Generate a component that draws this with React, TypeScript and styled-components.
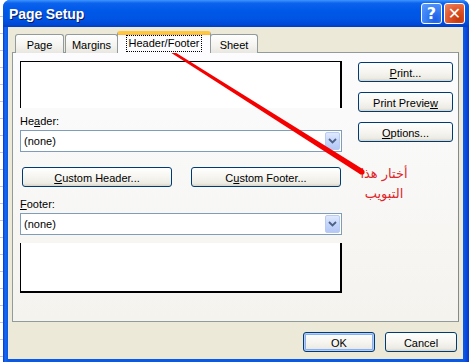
import React from "react";
import styled, { createGlobalStyle, css } from "styled-components";

const Global = createGlobalStyle`
  html, body { margin: 0; padding: 0; }
  body {
    width: 469px; height: 362px; overflow: hidden;
    background: #fff repeating-linear-gradient(to bottom, transparent 0 16px, #c8c8c8 16px 17px);
    font-family: "Liberation Sans", Arial, sans-serif;
    font-size: 11px;
    color: #000;
  }
`;

const Root = styled.div`
  position: relative;
  width: 469px;
  height: 362px;
  display: flex;
`;

const Window = styled.div`
  margin-left: 3px;
  width: 466px;
  height: 362px;
  display: flex;
  flex-direction: column;
  background: linear-gradient(to right, #0831d9 0, #166aee 2px, #0a58e6 5px, #0a58e6 calc(100% - 5px), #0636c8 100%);
  border-radius: 7px 7px 0 0;
  overflow: hidden;
`;

const TitleBar = styled.div`
  height: 27px;
  flex: none;
  display: flex;
  align-items: center;
  padding: 0 4px 0 6px;
  background: linear-gradient(to bottom, #3d95ff 0%, #0b62ec 12%, #0058e8 40%, #0054e3 70%, #0049d6 90%, #003dc4 100%);
`;

const Title = styled.div`
  flex: 1;
  color: #fff;
  font-family: "Liberation Sans", Arial, sans-serif;
  font-weight: bold;
  font-size: 14px;
  text-shadow: 1px 1px 0 #0a1a6a;
  letter-spacing: -0.1px;
  padding-top: 1px;
`;

const CaptionButton = styled.div<{ $kind: "help" | "close" }>`
  width: 19px;
  height: 19px;
  margin-left: 2px;
  border: 1px solid #fff;
  border-radius: 3px;
  display: flex;
  align-items: center;
  justify-content: center;
  color: #fff;
  font-family: "DejaVu Sans", sans-serif;
  font-weight: bold;
  font-size: 16px;
  ${(p) =>
    p.$kind === "help"
      ? css`background: radial-gradient(circle at 70% 80%, #1a5fe8 0%, #3a80f5 50%, #5f9cfa 100%);`
      : css`background: radial-gradient(circle at 70% 80%, #c4380d 0%, #e0562a 50%, #ee8a66 100%);`}
`;

const Frame = styled.div`
  flex: 1;
  display: flex;
  padding: 0 6px 3px 5px;
`;

const Body = styled.div`
  flex: 1;
  background: #ece9d8;
  display: flex;
  flex-direction: column;
  padding: 4px 4px 0 4px;
`;

const TabStrip = styled.div`
  display: flex;
  align-items: flex-end;
  height: 22px;
  padding-left: 3px;
  position: relative;
  z-index: 1;
  margin-bottom: -1px;
`;

const Tab = styled.div<{ $active?: boolean; $w: number }>`
  box-sizing: border-box;
  width: ${(p) => p.$w}px;
  height: 19px;
  margin-right: 1px;
  border: 1px solid #919b9c;
  border-bottom: none;
  border-radius: 3px 3px 0 0;
  background: linear-gradient(to bottom, #fefefe 0%, #f4f3ef 60%, #e7e6df 100%);
  display: flex;
  align-items: center;
  justify-content: center;
  padding-top: 1px;
  ${(p) =>
    p.$active &&
    css`
      height: 22px;
      margin: 0 -1px 0 -2px;
      border-top: 3px solid #ffc83c;
      background: #fcfcfe;
      padding-top: 0;
      box-shadow: inset 0 1px 0 #f8b44a;
    `}
`;

const FocusText = styled.span`
  outline: 1px dotted #000;
  outline-offset: 0;
  padding: 1px 2px 2px;
`;

const Panel = styled.div`
  height: 270px;
  box-sizing: border-box;
  border: 1px solid #919b9c;
  border-right-color: #7f8b8c;
  background: linear-gradient(to bottom, #fcfcfe 0%, #f4f3ee 100%);
  display: grid;
  grid-template-columns: 322px 95px;
  column-gap: 16px;
  padding: 8px 0 0 7px;
`;

const LeftCol = styled.div`
  display: flex;
  flex-direction: column;
`;

const RightCol = styled.div`
  display: flex;
  flex-direction: column;
  gap: 10px;
  padding-top: 1px;
`;

const Preview = styled.div<{ $part: "top" | "bottom" }>`
  box-sizing: border-box;
  background: #fff;
  border-left: 1px solid #000;
  border-right: 2px solid #000;
  ${(p) =>
    p.$part === "top"
      ? css`height: 47px; border-top: 1px solid #000;`
      : css`height: 50px; border-bottom: 2px solid #000; margin-top: 8px;`}
`;

const Label = styled.div<{ $mt: number }>`
  margin-top: ${(p) => p.$mt}px;
  height: 13px;
  line-height: 13px;
  margin-bottom: 2px;
`;

const Combo = styled.div`
  box-sizing: border-box;
  height: 22px;
  border: 1px solid #7f9db9;
  background: #fff;
  display: flex;
  align-items: center;
  padding: 1px 1px 1px 3px;
`;

const ComboText = styled.div`
  flex: 1;
`;

const DropButton = styled.div`
  width: 15px;
  height: 18px;
  border: 1px solid #b9cbf3;
  border-radius: 2px;
  box-sizing: border-box;
  background: linear-gradient(to bottom, #e0e9fd 0%, #c5d6fb 50%, #b4c8f6 100%);
  display: flex;
  align-items: center;
  justify-content: center;
`;

const ButtonRow = styled.div`
  display: flex;
  gap: 19px;
  margin: 15px 0 0 2px;
`;

const Button = styled.div<{ $w: number; $default?: boolean }>`
  box-sizing: border-box;
  width: ${(p) => p.$w}px;
  height: 20px;
  border: 1px solid #003c74;
  border-radius: 3px;
  background: linear-gradient(to bottom, #ffffff 0%, #f6f5f0 50%, #ecebe4 85%, #d8d4c6 100%);
  display: flex;
  align-items: center;
  justify-content: center;
  padding-top: 1px;
  ${(p) =>
    p.$default &&
    css`
      box-shadow: inset 0 0 0 1px #b6cdf7, inset 0 0 0 2px #8aaff0;
    `}
`;

const Footer = styled.div`
  display: flex;
  justify-content: flex-end;
  gap: 10px;
  padding: 10px 2px 0 0;
`;

const Annotation = styled.div`
  position: absolute;
  left: 352px;
  top: 164px;
  width: 64px;
  direction: rtl;
  text-align: center;
  color: #e0252b;
  font-family: "DejaVu Sans", sans-serif;
  font-size: 13px;
  line-height: 20px;
`;

const Overlay = styled.svg`
  position: absolute;
  left: 0;
  top: 0;
  pointer-events: none;
`;

const Chevron = () => (
  <svg width="9" height="6" viewBox="0 0 9 6">
    <path d="M1 1 L4.5 4.5 L8 1" stroke="#4d6185" strokeWidth="1.8" fill="none" />
  </svg>
);

export default function App() {
  return (
    <>
      <Global />
      <Root>
        <Window>
          <TitleBar>
            <Title>Page Setup</Title>
            <CaptionButton $kind="help">?</CaptionButton>
            <CaptionButton $kind="close">✕</CaptionButton>
          </TitleBar>
          <Frame>
            <Body>
              <TabStrip>
                <Tab $w={49}>Page</Tab>
                <Tab $w={53}>Margins</Tab>
                <Tab $w={94} $active>
                  <FocusText>Header/Footer</FocusText>
                </Tab>
                <Tab $w={48}>Sheet</Tab>
              </TabStrip>
              <Panel>
                <LeftCol>
                  <Preview $part="top" />
                  <Label $mt={7}>
                    He<u>a</u>der:
                  </Label>
                  <Combo>
                    <ComboText>(none)</ComboText>
                    <DropButton>
                      <Chevron />
                    </DropButton>
                  </Combo>
                  <ButtonRow>
                    <Button $w={150}>
                      <span>
                        <u>C</u>ustom Header...
                      </span>
                    </Button>
                    <Button $w={150}>
                      <span>
                        C<u>u</u>stom Footer...
                      </span>
                    </Button>
                  </ButtonRow>
                  <Label $mt={11}>
                    <u>F</u>ooter:
                  </Label>
                  <Combo>
                    <ComboText>(none)</ComboText>
                    <DropButton>
                      <Chevron />
                    </DropButton>
                  </Combo>
                  <Preview $part="bottom" />
                </LeftCol>
                <RightCol>
                  <Button $w={95}>
                    <span>
                      <u>P</u>rint...
                    </span>
                  </Button>
                  <Button $w={95}>
                    <span>
                      Print Previe<u>w</u>
                    </span>
                  </Button>
                  <Button $w={95}>
                    <span>
                      <u>O</u>ptions...
                    </span>
                  </Button>
                </RightCol>
              </Panel>
              <Footer>
                <Button $w={72} $default>
                  OK
                </Button>
                <Button $w={72}>Cancel</Button>
              </Footer>
            </Body>
          </Frame>
        </Window>
        <Annotation>
          أختار هذا
          <br />
          التبويب
        </Annotation>
        <Overlay width="469" height="362" viewBox="0 0 469 362">
          <polygon points="158.6,41.9 363.4,169.6 360.6,174.4 157.4,44.1" fill="#f40000" />
          <circle cx="362" cy="172" r="2.6" fill="#f40000" />
        </Overlay>
      </Root>
    </>
  );
}
